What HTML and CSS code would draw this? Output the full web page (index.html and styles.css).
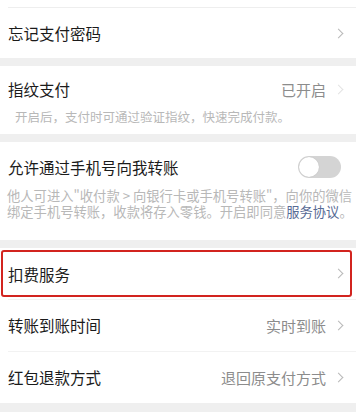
FILE: index.html
```html
<!DOCTYPE html>
<html lang="zh">
<head>
<meta charset="utf-8">
<link rel="stylesheet" href="styles.css">
</head>
<body>
<div class="page">
  <div class="group">
    <div class="stub"></div>
    <div class="row">
      <span class="title">忘记支付密码</span>
      <span class="right"><span class="chev"></span></span>
    </div>
  </div>

  <div class="group block fp">
    <div class="head">
      <span class="title">指纹支付</span>
      <span class="right"><span class="value">已开启</span><span class="chev faint"></span></span>
    </div>
    <p class="desc desc-fp">开启后，支付时可通过验证指纹，快速完成付款。</p>
  </div>

  <div class="group block phone">
    <div class="head">
      <span class="title">允许通过手机号向我转账</span>
      <span class="toggle"><span class="knob"></span></span>
    </div>
    <p class="desc desc-phone">他人可进入"收付款 &gt; 向银行卡或手机号转账"，向你的微信<br>绑定手机号转账，收款将存入零钱。开启即同意<span class="link">服务协议</span>。</p>
  </div>

  <div class="group">
    <div class="row hl">
      <span class="title">扣费服务</span>
      <span class="right"><span class="chev"></span></span>
    </div>
    <div class="row sep">
      <span class="title">转账到账时间</span>
      <span class="right"><span class="value">实时到账</span><span class="chev"></span></span>
    </div>
    <div class="row sep">
      <span class="title">红包退款方式</span>
      <span class="right"><span class="value">退回原支付方式</span><span class="chev"></span></span>
    </div>
  </div>
</div>
</body>
</html>
```

FILE: styles.css
```css
* { box-sizing: border-box; }
html, body {
  margin: 0;
  padding: 0;
  background: #efefef;
  font-family: "Noto Sans CJK SC", "Noto Sans", sans-serif;
}
.page {
  width: 356px;
  height: 412px;
  overflow: hidden;
  display: flex;
  flex-direction: column;
  gap: 8px;
}
.group {
  background: #fff;
}
.stub {
  height: 8px;
  border-bottom: 1px solid #eeeeee;
  margin-left: 8px;
}
.row {
  height: 50px;
  display: flex;
  align-items: center;
  justify-content: space-between;
  padding: 0 12px 0 8px;
  position: relative;
}
.row.sep {
  height: 52px;
}
.row.sep::before {
  content: "";
  position: absolute;
  left: 8px;
  right: 0;
  top: 0;
  border-top: 1px solid #f2f2f2;
}
.title {
  font-size: 15.5px;
  color: #1b1b1b;
}
.right {
  display: flex;
  align-items: center;
  gap: 9px;
}
.value {
  font-size: 15px;
  color: #8c8c8c;
}
.chev {
  width: 7px;
  height: 7px;
  border-top: 1.2px solid #b8b8b8;
  border-right: 1.2px solid #b8b8b8;
  transform: rotate(45deg);
  margin-right: 2px;
}
.chev.faint {
  border-color: #e3e3e3;
}
.block {
  padding: 12px 12px 12px 8px;
}
.fp {
  height: 68px;
}
.head {
  display: flex;
  align-items: center;
  justify-content: space-between;
  height: 22px;
}
.desc {
  margin: 9px 0 0;
  font-size: 13px;
  line-height: 16px;
  color: #b8b8b8;
  white-space: nowrap;
}
.desc-fp {
  font-size: 12.5px;
  padding-left: 7px;
}
.phone {
  height: 98px;
  padding-top: 14px;
}
.desc-phone {
  margin-top: 10px;
  font-size: 13.3px;
  margin-left: -1px;
}
.link {
  color: #576b95;
}
.toggle {
  width: 43px;
  height: 22px;
  border-radius: 11px;
  background: #d4d4d4;
  position: relative;
  margin-right: 3px;
}
.knob {
  position: absolute;
  left: 1px;
  top: 1px;
  width: 20px;
  height: 20px;
  border-radius: 50%;
  background: #fff;
  box-shadow: 0 0 1px rgba(0,0,0,0.2);
}
.row.hl {
  height: 51px;
}
.row.hl::after {
  content: "";
  position: absolute;
  left: 1px;
  right: 4px;
  top: 2px;
  bottom: 2px;
  border: 2.5px solid #d2241f;
  border-radius: 3px;
}
```
